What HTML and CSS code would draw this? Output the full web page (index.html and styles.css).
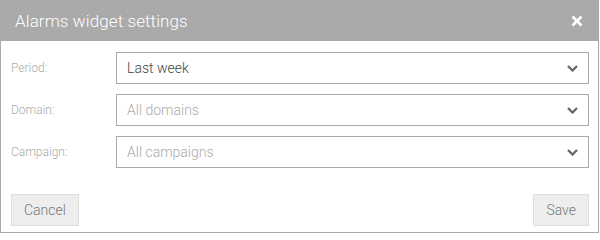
FILE: index.html
```html
<!DOCTYPE html>
<html>
<head>
<meta charset="utf-8">
<link rel="stylesheet" href="styles.css">
</head>
<body>
<div class="dialog">
  <div class="header">
    <span class="title">Alarms widget settings</span>
    <svg class="close" width="12" height="12" viewBox="0 0 12 12"><path d="M1.5 1.5L10.5 10.5M10.5 1.5L1.5 10.5" stroke="#fff" stroke-width="2.6" stroke-linecap="butt"/></svg>
  </div>
  <div class="body">
    <div class="row">
      <label class="label">Period:</label>
      <div class="select"><span class="value">Last week</span><svg class="chev" width="11" height="7" viewBox="0 0 11 7"><path d="M1 1L5.5 5.5L10 1" fill="none" stroke="#666" stroke-width="2.3"/></svg></div>
    </div>
    <div class="row">
      <label class="label">Domain:</label>
      <div class="select"><span class="value placeholder">All domains</span><svg class="chev" width="11" height="7" viewBox="0 0 11 7"><path d="M1 1L5.5 5.5L10 1" fill="none" stroke="#666" stroke-width="2.3"/></svg></div>
    </div>
    <div class="row">
      <label class="label">Campaign:</label>
      <div class="select"><span class="value placeholder">All campaigns</span><svg class="chev" width="11" height="7" viewBox="0 0 11 7"><path d="M1 1L5.5 5.5L10 1" fill="none" stroke="#666" stroke-width="2.3"/></svg></div>
    </div>
  </div>
  <div class="footer">
    <button class="btn">Cancel</button>
    <button class="btn">Save</button>
  </div>
</div>
</body>
</html>
```

FILE: styles.css
```css
html, body {
  margin: 0;
  padding: 0;
  background: #fff;
  font-family: Roboto, "Liberation Sans", sans-serif;
}
.dialog {
  width: 599px;
  height: 233px;
  box-sizing: border-box;
  border: 1px solid #aaa;
  border-top: none;
  display: flex;
  flex-direction: column;
}
.header {
  height: 41px;
  background: #aaa;
  margin: 0 -1px;
  display: flex;
  align-items: center;
  justify-content: space-between;
  padding: 0 16px 0 15px;
  box-sizing: border-box;
}
.title {
  color: #fff;
  font-size: 17px;
  font-weight: 300;
  letter-spacing: 0.1px;
}
.close {
  display: block;
}
.body {
  padding: 11px 9px 0 10px;
  display: flex;
  flex-direction: column;
  gap: 10px;
}
.row {
  display: flex;
  align-items: center;
}
.label {
  width: 105px;
  font-size: 12px;
  font-weight: 300;
  color: #aaa;
}
.select {
  flex: 1;
  height: 32px;
  box-sizing: border-box;
  border: 1px solid #aaa;
  display: flex;
  align-items: center;
  justify-content: space-between;
  padding: 0 10px 0 10px;
}
.value {
  font-size: 14px;
  color: #444;
  font-weight: 300;
}
.value.placeholder {
  color: #aaa;
}
.chev {
  display: block;
}
.footer {
  margin-top: auto;
  padding: 0 9px 6px 10px;
  display: flex;
  justify-content: space-between;
}
.btn {
  height: 32px;
  box-sizing: border-box;
  border: 1px solid #ddd;
  background: #eee;
  color: #777;
  font-family: Roboto, "Liberation Sans", sans-serif;
  font-size: 14px;
  font-weight: 300;
  padding: 0 12px;
}
```
